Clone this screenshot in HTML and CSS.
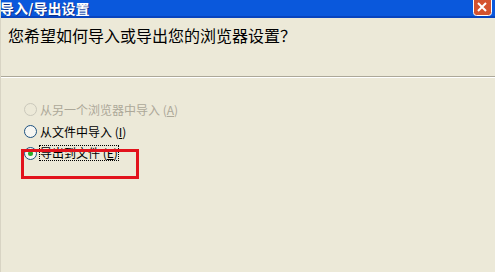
FILE: index.html
```html
<!DOCTYPE html>
<html lang="zh-CN">
<head>
    <meta charset="UTF-8">
    <title>导入/导出设置</title>
    <link rel="stylesheet" href="styles.css">
</head>
<body>

<div class="window">
    <header class="caption">
        <span class="caption-text">导入/导出设置</span>
        <svg class="close-btn" width="19" height="16" viewBox="0 0 19 16">
            <rect x="0.5" y="-4" width="18" height="19.5" rx="3" fill="#d4522e" stroke="#ffffff" stroke-width="1"/>
            <path d="M5 3 L13 11 M13 3 L5 11" stroke="#ffffff" stroke-width="2"/>
        </svg>
    </header>

    <div class="header">
        <p class="question">您希望如何导入或导出您的浏览器设置？</p>
    </div>

    <div class="options">
        <label class="option disabled">
            <span class="radio"></span>
            <span class="label-text">从另一个浏览器中导入 (<u>A</u>)</span>
        </label>
        <label class="option">
            <span class="radio"></span>
            <span class="label-text">从文件中导入 (<u>I</u>)</span>
        </label>
        <label class="option">
            <span class="radio"><span class="dot"></span></span>
            <span class="label-text focused">导出到文件 (<u>E</u>)</span>
        </label>
    </div>

    <!-- red annotation box drawn over the dialog -->
    <div class="highlight"></div>
</div>

</body>
</html>
```

FILE: styles.css
```css
html, body {
    forced-color-adjust: none;
    -webkit-print-color-adjust: exact;
    print-color-adjust: exact;
    color-scheme: light;
}
body {
    margin: 0;
    font-family: "Noto Sans CJK SC", "Liberation Sans", sans-serif;
    background-color: #ece9d8;
    overflow: hidden;
}
.window {
    position: relative;
    width: 495px;
    height: 272px;
    background-color: #ece9d8;
    border-left: 1px solid #d8d4c4;
    box-sizing: border-box;
}
.caption {
    display: flex;
    align-items: flex-start;
    justify-content: space-between;
    height: 18px;
    background-color: #0a58dc;
    border-bottom: 2px solid #0844be;
    box-sizing: border-box;
    overflow: hidden;
}
.caption-text {
    color: #ffffff;
    font-weight: bold;
    font-size: 14px;
    line-height: 16px;
    margin-left: -1px;
    text-shadow: 1px 1px 0 #0a2f8a;
}
.close-btn {
    display: block;
    margin-right: 3px;
}
.header {
    height: 59px;
    border-bottom: 1px solid #aca899;
    box-shadow: 0 1px 0 #ffffff;
    box-sizing: border-box;
    padding: 7px 0 0 7px;
}
.question {
    margin: 0;
    font-size: 16px;
    line-height: 20px;
    color: #000000;
}
.options {
    padding: 21px 0 0 23px;
}
.option {
    display: flex;
    align-items: center;
    height: 22px;
    font-size: 12px;
    color: #000000;
}
.option.disabled {
    color: #aca899;
}
.radio {
    display: flex;
    align-items: center;
    justify-content: center;
    width: 11px;
    height: 11px;
    border: 1px solid #1c5180;
    border-radius: 50%;
    background-color: #f6f6f2;
    margin-right: 3px;
}
.disabled .radio {
    border-color: #cac8bb;
    background-color: #ece9d8;
}
.dot {
    width: 5px;
    height: 5px;
    border-radius: 50%;
    background-color: #2aa82a;
}
.focused {
    outline: 1px dotted #000000;
    line-height: 14px;
}
.highlight {
    position: absolute;
    left: 20px;
    top: 149px;
    width: 118px;
    height: 30px;
    border: 3px solid #e2121c;
    box-sizing: border-box;
}
```
